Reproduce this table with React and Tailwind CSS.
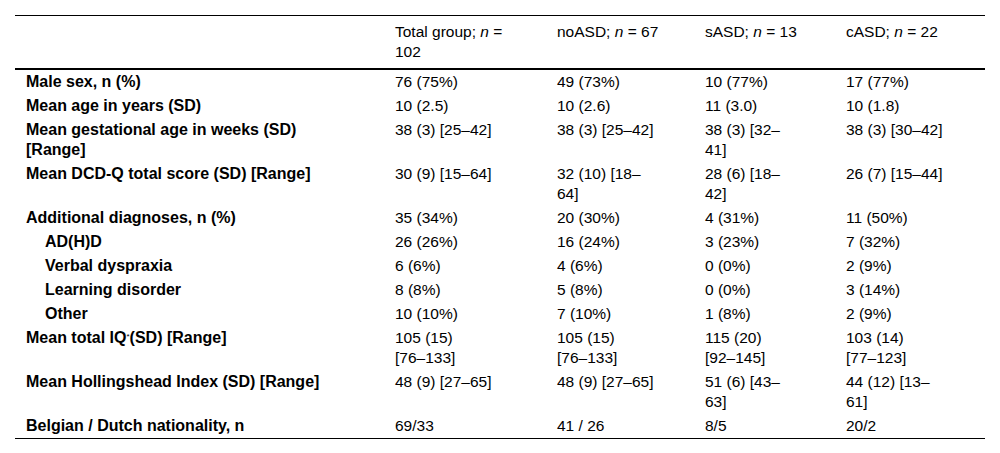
const header = [
  null,
  ['Total group; ', 'n', ' =', '102'],
  ['noASD; ', 'n', ' = 67'],
  ['sASD; ', 'n', ' = 13'],
  ['cASD; ', 'n', ' = 22'],
];

const rows = [
  { label: ['Male sex, n (%)'], cells: [['76 (75%)'], ['49 (73%)'], ['10 (77%)'], ['17 (77%)']] },
  { label: ['Mean age in years (SD)'], cells: [['10 (2.5)'], ['10 (2.6)'], ['11 (3.0)'], ['10 (1.8)']] },
  {
    label: ['Mean gestational age in weeks (SD)', '[Range]'],
    cells: [['38 (3) [25–42]'], ['38 (3) [25–42]'], ['38 (3) [32–', '41]'], ['38 (3) [30–42]']],
  },
  {
    label: ['Mean DCD-Q total score (SD) [Range]'],
    cells: [['30 (9) [15–64]'], ['32 (10) [18–', '64]'], ['28 (6) [18–', '42]'], ['26 (7) [15–44]']],
  },
  { label: ['Additional diagnoses, n (%)'], cells: [['35 (34%)'], ['20 (30%)'], ['4 (31%)'], ['11 (50%)']] },
  { label: ['AD(H)D'], indent: true, cells: [['26 (26%)'], ['16 (24%)'], ['3 (23%)'], ['7 (32%)']] },
  { label: ['Verbal dyspraxia'], indent: true, cells: [['6 (6%)'], ['4 (6%)'], ['0 (0%)'], ['2 (9%)']] },
  { label: ['Learning disorder'], indent: true, cells: [['8 (8%)'], ['5 (8%)'], ['0 (0%)'], ['3 (14%)']] },
  { label: ['Other'], indent: true, cells: [['10 (10%)'], ['7 (10%)'], ['1 (8%)'], ['2 (9%)']] },
  {
    label: 'iq',
    cells: [['105 (15)', '[76–133]'], ['105 (15)', '[76–133]'], ['115 (20)', '[92–145]'], ['103 (14)', '[77–123]']],
  },
  {
    label: ['Mean Hollingshead Index (SD) [Range]'],
    cells: [['48 (9) [27–65]'], ['48 (9) [27–65]'], ['51 (6) [43–', '63]'], ['44 (12) [13–', '61]']],
  },
  { label: ['Belgian / Dutch nationality, n'], cells: [['69/33'], ['41 / 26'], ['8/5'], ['20/2']] },
];

const grid = 'grid grid-cols-[380px_162px_148px_141px_139px]';

function Lines({ lines }) {
  return (
    <div className="whitespace-nowrap">
      {lines.map((l, i) => (
        <div key={i}>{l}</div>
      ))}
    </div>
  );
}

function HeadCell({ parts }) {
  if (!parts) return <div className="pl-[11px]" />;
  return (
    <div className="whitespace-nowrap">
      <div>
        {parts[0]}
        <i>{parts[1]}</i>
        {parts[2]}
      </div>
      {parts[3] && <div>{parts[3]}</div>}
    </div>
  );
}

export default function App() {
  return (
    <div
      className="min-h-[453px] bg-white pt-[15px] px-[15px] text-[15.5px] leading-[20px] text-black"
      style={{ fontFamily: '"Liberation Sans", Arial, sans-serif' }}
    >
      <div className="w-[970px] border-t border-black">
        {/* Header */}
        <div className={`${grid} pt-[6px] pb-[6px] border-b-2 border-black`}>
          {header.map((h, i) => (
            <HeadCell key={i} parts={h} />
          ))}
        </div>

        {/* Body */}
        <div className="border-b border-black">
          {rows.map((row, i) => (
            <div key={i} className={`${grid} py-[2px]`}>
              <div className={`font-bold text-[16px] whitespace-nowrap ${row.indent ? 'pl-[30px]' : 'pl-[11px]'}`}>
                {row.label === 'iq' ? (
                  <div>
                    Mean total IQ<sup className="text-[8px] font-normal">*</sup>(SD) [Range]
                  </div>
                ) : (
                  row.label.map((l, j) => <div key={j}>{l}</div>)
                )}
              </div>
              {row.cells.map((c, j) => (
                <Lines key={j} lines={c} />
              ))}
            </div>
          ))}
        </div>
      </div>
    </div>
  );
}
